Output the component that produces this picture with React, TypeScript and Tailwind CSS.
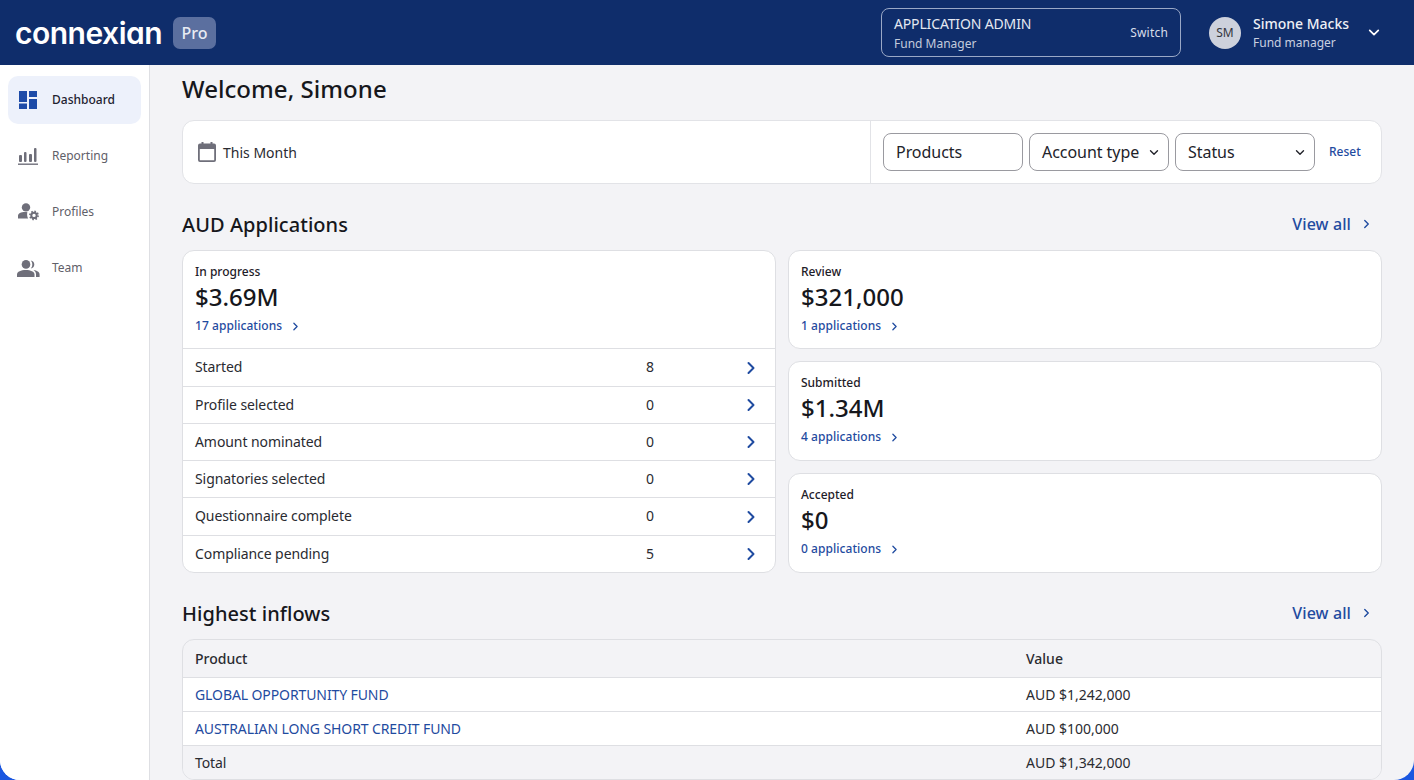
import React from "react";

const Chevron = ({ className = "" }: { className?: string }) => (
  <svg viewBox="0 0 10 14" className={className} fill="none" stroke="currentColor" strokeWidth="2" strokeLinecap="round" strokeLinejoin="round">
    <path d="M2.5 2 L7.5 7 L2.5 12" />
  </svg>
);

const Down = ({ className = "" }: { className?: string }) => (
  <svg viewBox="0 0 14 10" className={className} fill="none" stroke="currentColor" strokeWidth="2" strokeLinecap="round" strokeLinejoin="round">
    <path d="M2 2.5 L7 7.5 L12 2.5" />
  </svg>
);

const DashboardIcon = () => (
  <svg viewBox="0 0 18 18" className="w-[18px] h-[18px]" fill="#1d4ba8">
    <rect x="0" y="0" width="8" height="11" />
    <rect x="10" y="0" width="8" height="6" />
    <rect x="0" y="12.5" width="8" height="5.5" />
    <rect x="10" y="8" width="8" height="10" />
  </svg>
);

const ReportingIcon = () => (
  <svg viewBox="0 0 20 18" className="w-[20px] h-[18px]" fill="#6f6f7a">
    <rect x="1" y="8" width="3" height="7" rx="1" />
    <rect x="6" y="5" width="2.5" height="10" rx="1" />
    <rect x="11" y="7" width="3" height="8" rx="1" />
    <rect x="16" y="1" width="2.5" height="14" rx="1" />
    <rect x="0" y="16.5" width="20" height="1.4" />
  </svg>
);

const ProfilesIcon = () => (
  <svg viewBox="0 0 21 18" className="w-[21px] h-[18px]" fill="#6f6f7a">
    <circle cx="8" cy="4.4" r="4.2" />
    <path d="M0 13c0-2.6 3-3.9 7-3.9 1 0 1.7.1 2.4.2-.6 2-.3 4.2.7 6.2H0z" />
    <circle cx="16" cy="12.4" r="2.7" fill="none" stroke="#6f6f7a" strokeWidth="2" />
    <circle cx="16" cy="12.4" r="4.1" fill="none" stroke="#6f6f7a" strokeWidth="1.6" strokeDasharray="1.6 1.6" />
  </svg>
);

const TeamIcon = () => (
  <svg viewBox="0 0 23 17" className="w-[23px] h-[17px]" fill="#6f6f7a">
    <circle cx="9" cy="4.4" r="4.3" />
    <path d="M0 17v-2.5c0-3 4-4.6 8.8-4.6s8.7 1.6 8.7 4.6V17H0z" />
    <path d="M13.8.4c2.1.2 3.5 2 3.5 4s-1.4 3.8-3.5 4c1-1.1 1.5-2.5 1.5-4s-.5-2.900-1.500-4z" />
    <path d="M16.500 10c3.300.5 6.100 1.800 6.100 4.500V17h-3.600v-2.800c0-1.700-1-3.100-2.500-4.200z" />
  </svg>
);

const CalendarIcon = () => (
  <svg viewBox="0 0 18 20" className="w-[18px] h-[20px]">
    <rect x="3.500" y="0" width="2" height="3" fill="#6f6f7a" />
    <rect x="12.500" y="0" width="2" height="3" fill="#6f6f7a" />
    <path d="M2 1.500h14a2 2 0 0 1 2 2V18a2 2 0 0 1-2 2H2a2 2 0 0 1-2-2V3.500a2 2 0 0 1 2-2z" fill="#6f6f7a" />
    <rect x="1.800" y="7" width="14.400" height="11.200" fill="#fff" rx="0.500" />
  </svg>
);

const NavItem = ({ icon, label, active }: { icon: React.ReactNode; label: string; active?: boolean }) => (
  <div className={`flex items-center h-[48px] rounded-[10px] ${active ? "bg-[#edf1fb] text-[#1e2230] font-medium" : "text-[#5f6069]"} mb-[8px]`}>
    <div className="w-[40px] mr-[4px] flex justify-center">{icon}</div>
    <span className="text-[12px]">{label}</span>
  </div>
);

const Select = ({ label, arrow = true }: { label: string; arrow?: boolean }) => (
  <div className="w-[140px] h-[38px] rounded-[8px] border border-[#9a9aa0] flex items-center justify-between pl-[12px] pr-[9px] text-[16px] tracking-[-0.05px] text-[#22232a]">
    <span>{label}</span>
    {arrow && <Down className="w-[10px] h-[7px] text-[#22232a]" />}
  </div>
);

const Stat = ({ label, value, link, className = "" }: { label: string; value: string; link: string; className?: string }) => (
  <div className={`px-[12px] pt-[13px] ${className}`}>
    <div className="text-[12px] leading-[16px] text-[#1e2028] font-medium">{label}</div>
    <div className="text-[24px] leading-[32px] text-[#16171c] font-medium mt-[1px]">{value}</div>
    <div className="flex items-center mt-[4px] text-[12px] leading-[18px] font-medium tracking-[0.05px] text-[#1f4ba0]">
      <span>{link}</span>
      <Chevron className="w-[7px] h-[9px] ml-[10px]" />
    </div>
  </div>
);

const Row = ({ label, n, h }: { label: string; n: string; h: string }) => (
  <div className={`flex items-center border-t border-[#dedfe3] px-[12px] text-[14px] tracking-[-0.08px] text-[#2a2b31] ${h}`}>
    <span className="w-[451px] pb-[2px]">{label}</span>
    <span className="w-[100px] pb-[2px]">{n}</span>
    <Chevron className="w-[10px] h-[14px] text-[#1f4ba0]" />
  </div>
);

const SectionHead = ({ title, className = "" }: { title: string; className?: string }) => (
  <div className={`flex items-center justify-between ${className}`}>
    <h2 className="text-[20px] leading-[28px] font-medium tracking-[0.05px] text-[#16171c]">{title}</h2>
    <div className="flex items-center text-[16px] font-medium tracking-[0.1px] text-[#1f4ba0] pr-[12px] pb-[2px]">
      <span>View all</span>
      <Chevron className="w-[7px] h-[10px] ml-[12px]" />
    </div>
  </div>
);

const TableRow = ({ a, b, link, grey, h }: { a: string; b: string; link?: boolean; grey?: boolean; h: string }) => (
  <div className={`flex items-center px-[12px] text-[14px] border-t border-[#dedfe3] ${h} ${grey ? "bg-[#f3f3f6]" : "bg-white"}`}>
    <span className={`w-[831px] tracking-[-0.1px] ${link ? "text-[#1f4ba0]" : "text-[#2a2b31]"}`}>{a}</span>
    <span className="text-[#2a2b31]">{b}</span>
  </div>
);

export default function App() {
  return (
    <div className="h-[780px] w-[1414px] overflow-hidden bg-[#1a56e0] font-['Noto_Sans',sans-serif]">
      <div className="h-full flex flex-col rounded-b-[20px] overflow-hidden bg-[#f3f3f6]">
        <header className="h-[65px] shrink-0 bg-[#0f2d6b] flex items-center text-white">
          <span className="ml-[15px] mt-[1px] text-[30px] leading-none font-['Inter',sans-serif] font-semibold tracking-[-0.5px] w-[146px] [font-feature-settings:'cv11']">connexian</span>
          <span className="ml-[12px] w-[43px] h-[32px] rounded-[7px] bg-[#5b6f9f] flex items-center justify-center text-[16px] font-medium text-[#e8ebf3]">Pro</span>
          <div className="ml-auto w-[300px] h-[49px] rounded-[8px] border border-[#9aa8c6] flex items-center justify-between pl-[12px] pr-[12px]">
            <div>
              <div className="text-[14px] leading-[19px] tracking-[-0.15px] text-[#e4e8f1]">APPLICATION ADMIN</div>
              <div className="text-[12px] leading-[17px] mt-[2px] text-[#c3cbdd]">Fund Manager</div>
            </div>
            <span className="text-[12px] tracking-[0.2px] text-[#d8deea]">Switch</span>
          </div>
          <div className="ml-[28px] w-[32px] h-[32px] rounded-full bg-[#cdd1dc] flex items-center justify-center text-[12px] text-[#33353d]">SM</div>
          <div className="ml-[12px] w-[115px]">
            <div className="text-[14px] leading-[19px] font-medium text-[#eef0f5]">Simone Macks</div>
            <div className="text-[12px] leading-[17px] mt-[1px] text-[#c9d0e0]">Fund manager</div>
          </div>
          <Down className="w-[12px] h-[9px] mr-[34px] text-white" />
        </header>
        <div className="flex flex-1 min-h-0">
          <aside className="w-[150px] shrink-0 bg-white border-r border-[#dedfe3] px-[8px] pt-[11px]">
            <NavItem icon={<DashboardIcon />} label="Dashboard" active />
            <NavItem icon={<ReportingIcon />} label="Reporting" />
            <NavItem icon={<ProfilesIcon />} label="Profiles" />
            <NavItem icon={<TeamIcon />} label="Team" />
          </aside>
          <main className="flex-1 px-[32px] min-w-0">
            <h1 className="text-[24px] leading-[32px] font-medium tracking-[0.05px] text-[#16171c] mt-[8px]">Welcome, Simone</h1>
            <div className="mt-[15px] h-[64px] bg-white border border-[#e2e3e7] rounded-[12px] flex">
              <div className="w-[688px] border-r border-[#e2e3e7] flex items-center pl-[15px] text-[14px] text-[#2a2b31]">
                <CalendarIcon />
                <span className="ml-[7px]">This Month</span>
              </div>
              <div className="flex items-center gap-[6px] pl-[12px]">
                <Select label="Products" arrow={false} />
                <Select label="Account type" />
                <Select label="Status" />
                <span className="ml-[8px] text-[12px] font-medium text-[#1f4ba0]">Reset</span>
              </div>
            </div>
            <SectionHead title="AUD Applications" className="mt-[27px]" />
            <div className="mt-[11px] flex gap-[12px]">
              <div className="w-[594px] h-[323px] bg-white border border-[#dedfe3] rounded-[12px] overflow-hidden">
                <Stat label="In progress" value="$3.69M" link="17 applications" className="h-[97px]" />
                <Row label="Started" n="8" h="h-[38px]" />
                <Row label="Profile selected" n="0" h="h-[37px]" />
                <Row label="Amount nominated" n="0" h="h-[37px]" />
                <Row label="Signatories selected" n="0" h="h-[37px]" />
                <Row label="Questionnaire complete" n="0" h="h-[38px]" />
                <Row label="Compliance pending" n="5" h="h-[37px]" />
              </div>
              <div className="w-[594px] flex flex-col gap-[12px]">
                <div className="h-[99px] bg-white border border-[#dedfe3] rounded-[12px]">
                  <Stat label="Review" value="$321,000" link="1 applications" />
                </div>
                <div className="h-[100px] bg-white border border-[#dedfe3] rounded-[12px]">
                  <Stat label="Submitted" value="$1.34M" link="4 applications" />
                </div>
                <div className="h-[100px] bg-white border border-[#dedfe3] rounded-[12px]">
                  <Stat label="Accepted" value="$0" link="0 applications" />
                </div>
              </div>
            </div>
            <SectionHead title="Highest inflows" className="mt-[27px]" />
            <div className="mt-[11px] border border-[#dedfe3] rounded-[12px] overflow-hidden h-[141px]">
              <div className="h-[37px] flex items-center px-[12px] pb-[1px] text-[14px] font-medium text-[#2a2b31]">
                <span className="w-[831px]">Product</span>
                <span>Value</span>
              </div>
              <TableRow a="GLOBAL OPPORTUNITY FUND" b="AUD $1,242,000" link h="h-[34px]" />
              <TableRow a="AUSTRALIAN LONG SHORT CREDIT FUND" b="AUD $100,000" link h="h-[34px]" />
              <TableRow a="Total" b="AUD $1,342,000" grey h="h-[34px]" />
            </div>
          </main>
        </div>
      </div>
    </div>
  );
}
